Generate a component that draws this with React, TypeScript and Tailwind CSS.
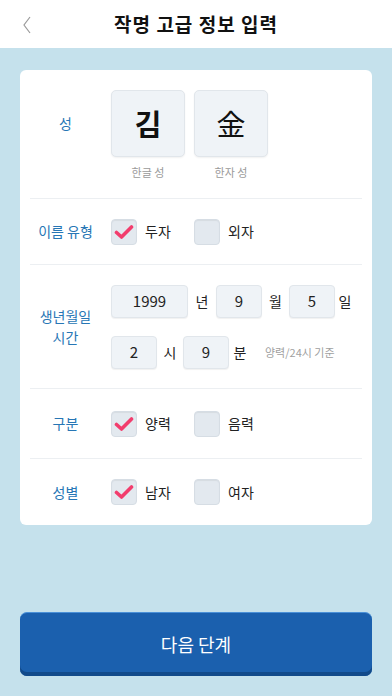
import React from "react";

const font = { fontFamily: '"Noto Sans CJK KR", "Noto Sans", sans-serif' };

function Check({ on }: { on?: boolean }) {
  return (
    <div className="w-[26px] h-[26px] rounded-[4px] bg-[#e3e9ef] border border-[#d6dde4] shadow-[inset_0_1px_1px_rgba(0,0,0,0.06)] flex items-center justify-center">
      {on && (
        <svg width="20" height="16" viewBox="0 0 20 16">
          <path d="M2.5 8.5 L7.5 13 L17.5 3" fill="none" stroke="#f23d6d" strokeWidth="3.6" strokeLinecap="round" strokeLinejoin="round" />
        </svg>
      )}
    </div>
  );
}

function Field({ children, w }: { children: React.ReactNode; w: string }) {
  return (
    <div className={`${w} h-[33px] rounded-[4px] bg-[#eff3f7] border border-[#e1e6eb] shadow-[0_1px_1px_rgba(0,0,0,0.06)] flex items-center justify-center text-[15px] text-[#222]`}>
      {children}
    </div>
  );
}

function Label({ children }: { children: React.ReactNode }) {
  return <div className="w-[91px] shrink-0 text-center text-[14px] leading-[21px] text-[#2776b5]">{children}</div>;
}

function Divider() {
  return <div className="mx-[10px] h-px bg-[#eceff2]" />;
}

function Opt({ on, text }: { on?: boolean; text: string }) {
  return (
    <div className="flex items-center gap-[8px] w-[83px]">
      <Check on={on} />
      <span className="text-[14px] text-[#222]">{text}</span>
    </div>
  );
}

export default function App() {
  return (
    <div style={font} className="min-h-screen h-[696px] bg-[#c5e1ec] flex flex-col">
      <div className="h-[48px] bg-white relative flex items-center justify-center shrink-0">
        <svg className="absolute left-[22px] top-[16px]" width="10" height="18" viewBox="0 0 10 18">
          <path d="M8 1 L2 9 L8 17" fill="none" stroke="#9a9a9a" strokeWidth="1.2" />
        </svg>
        <div className="text-[19px] font-bold text-[#111] tracking-[1px]">작명 고급 정보 입력</div>
      </div>

      <div className="mx-[20px] mt-[22px] bg-white rounded-[6px]">
        {/* 성 */}
        <div className="h-[128px] flex pt-[20px]">
          <div className="h-[67px] flex items-center">
            <Label>성</Label>
          </div>
          <div className="flex gap-[9px]">
            {[
              ["김", "한글 성", "font-bold"],
              ["金", "한자 성", "font-normal"],
            ].map(([c, l, w]) => (
              <div key={c} className="flex flex-col items-center">
                <div className={`w-[74px] h-[67px] rounded-[5px] bg-[#eff3f7] border border-[#e1e6eb] shadow-[0_1px_2px_rgba(0,0,0,0.06)] flex items-center justify-center text-[29px] text-[#111] ${w}`}>
                  {c}
                </div>
                <div className="mt-[7px] text-[11px] text-[#9a9a9a]">{l}</div>
              </div>
            ))}
          </div>
        </div>
        <Divider />

        {/* 이름 유형 */}
        <div className="h-[65px] flex items-center">
          <Label>이름 유형</Label>
          <Opt on text="두자" />
          <Opt text="외자" />
        </div>
        <Divider />

        {/* 생년월일 */}
        <div className="h-[123px] flex items-center">
          <Label>
            생년월일
            <br />
            시간
          </Label>
          <div className="flex flex-col gap-[18px]">
            <div className="flex items-center">
              <Field w="w-[77px]">1999</Field>
              <span className="w-[28px] text-center text-[14px] text-[#222]">년</span>
              <Field w="w-[46px]">9</Field>
              <span className="w-[27px] text-center text-[14px] text-[#222]">월</span>
              <Field w="w-[46px]">5</Field>
              <span className="w-[20px] text-center text-[14px] text-[#222]">일</span>
            </div>
            <div className="flex items-center">
              <Field w="w-[46px]">2</Field>
              <span className="w-[26px] text-center text-[14px] text-[#222]">시</span>
              <Field w="w-[46px]">9</Field>
              <span className="w-[22px] text-center text-[14px] text-[#222]">분</span>
              <span className="ml-[14px] text-[11px] text-[#a0a0a0]">양력/24시 기준</span>
            </div>
          </div>
        </div>
        <Divider />

        {/* 구분 */}
        <div className="h-[69px] flex items-center">
          <Label>구분</Label>
          <Opt on text="양력" />
          <Opt text="음력" />
        </div>
        <Divider />

        {/* 성별 */}
        <div className="h-[66px] flex items-center">
          <Label>성별</Label>
          <Opt on text="남자" />
          <Opt text="여자" />
        </div>
      </div>

      <button className="mt-auto mb-[20px] mx-[20px] h-[64px] rounded-[7px] bg-[#1b60ae] border-t border-[#4a90d8] shadow-[inset_0_-4px_0_#124a8a] text-white text-[18px]">
        다음 단계
      </button>
    </div>
  );
}
